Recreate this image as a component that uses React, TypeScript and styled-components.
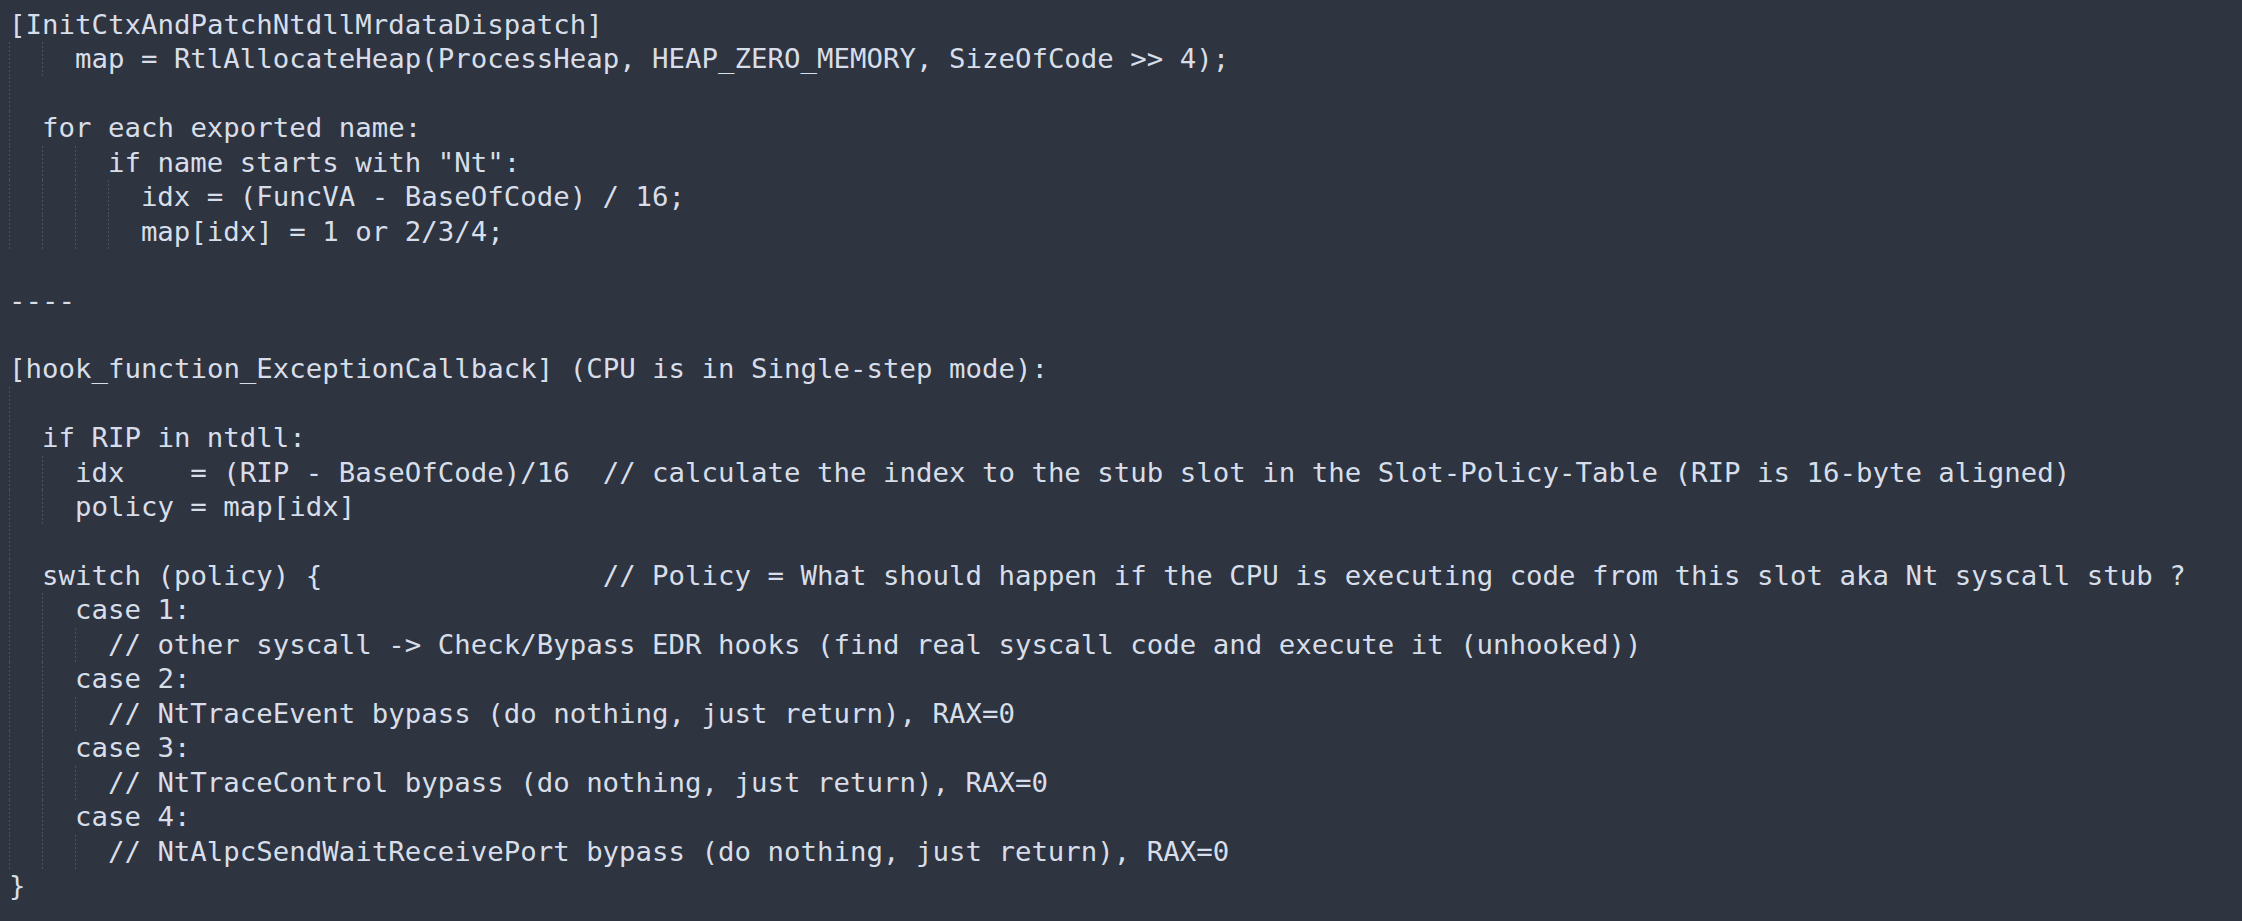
import React from "react";
import styled, { createGlobalStyle } from "styled-components";

const GlobalStyle = createGlobalStyle`
  html, body {
    margin: 0;
    padding: 0;
    background: #2e3440;
  }
  #root {
    min-height: 100vh;
  }
`;

const Editor = styled.div`
  box-sizing: border-box;
  min-height: 100vh;
  padding: 8px 0 0 9px;
  background: #2e3440;
  color: #d8dee9;
  font-family: "DejaVu Sans Mono", "Liberation Mono", monospace;
  font-size: 27.4px;
  display: flex;
  flex-direction: column;
`;

const Line = styled.div`
  display: flex;
  align-items: stretch;
  height: 34.44px;
  line-height: 34.44px;
  white-space: pre;
`;

const IndentUnit = styled.span`
  flex: 0 0 2ch;
  width: 2ch;
  background-image: repeating-linear-gradient(
    to bottom,
    #4a5261 0px,
    #4a5261 2px,
    transparent 2px,
    transparent 4px
  );
  background-size: 2px 100%;
  background-repeat: no-repeat;
  background-position: -1px 0;
`;

const Code = styled.span`
  display: block;
`;

type CodeLine = { indent: number; text: string };

const SWITCH_PAD = " ".repeat(17);

const lines: CodeLine[] = [
  { indent: 0, text: "[InitCtxAndPatchNtdllMrdataDispatch]" },
  { indent: 2, text: "map = RtlAllocateHeap(ProcessHeap, HEAP_ZERO_MEMORY, SizeOfCode >> 4);" },
  { indent: 1, text: "" },
  { indent: 1, text: "for each exported name:" },
  { indent: 3, text: 'if name starts with "Nt":' },
  { indent: 4, text: "idx = (FuncVA - BaseOfCode) / 16;" },
  { indent: 4, text: "map[idx] = 1 or 2/3/4;" },
  { indent: 0, text: "" },
  { indent: 0, text: "----" },
  { indent: 0, text: "" },
  { indent: 0, text: "[hook_function_ExceptionCallback] (CPU is in Single-step mode):" },
  { indent: 1, text: "" },
  { indent: 1, text: "if RIP in ntdll:" },
  {
    indent: 2,
    text:
      "idx    = (RIP - BaseOfCode)/16  // calculate the index to the stub slot in the Slot-Policy-Table (RIP is 16-byte aligned)",
  },
  { indent: 2, text: "policy = map[idx]" },
  { indent: 1, text: "" },
  {
    indent: 1,
    text:
      "switch (policy) {" +
      SWITCH_PAD +
      "// Policy = What should happen if the CPU is executing code from this slot aka Nt syscall stub ?",
  },
  { indent: 2, text: "case 1:" },
  { indent: 3, text: "// other syscall -> Check/Bypass EDR hooks (find real syscall code and execute it (unhooked))" },
  { indent: 2, text: "case 2:" },
  { indent: 3, text: "// NtTraceEvent bypass (do nothing, just return), RAX=0" },
  { indent: 2, text: "case 3:" },
  { indent: 3, text: "// NtTraceControl bypass (do nothing, just return), RAX=0" },
  { indent: 2, text: "case 4:" },
  { indent: 3, text: "// NtAlpcSendWaitReceivePort bypass (do nothing, just return), RAX=0" },
  { indent: 0, text: "}" },
];

export default function App() {
  return (
    <>
      <GlobalStyle />
      <Editor>
        {lines.map((l, i) => (
          <Line key={i}>
            {Array.from({ length: l.indent }).map((_, j) => (
              <IndentUnit key={j} />
            ))}
            <Code>{l.text}</Code>
          </Line>
        ))}
      </Editor>
    </>
  );
}
